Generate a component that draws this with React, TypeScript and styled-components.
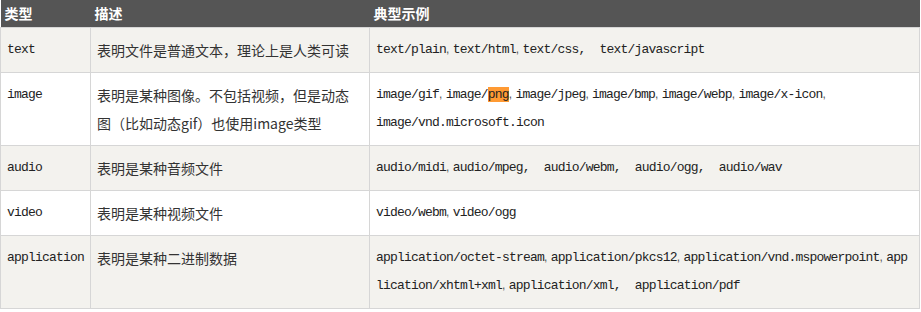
import React from 'react'
import styled, { createGlobalStyle } from 'styled-components'

const GlobalStyle = createGlobalStyle`
  body {
    margin: 0;
    background: #ffffff;
    font-family: "Noto Sans CJK SC", "Noto Sans", sans-serif;
  }
`

const Table = styled.table`
  width: 920px;
  border-collapse: collapse;
  table-layout: fixed;
  font-size: 14px;
  color: #333333;
`

const HeadCell = styled.th<{ $width?: number }>`
  width: ${p => (p.$width ? `${p.$width}px` : 'auto')};
  background: #555555;
  color: #ffffff;
  font-weight: 700;
  font-size: 14px;
  line-height: 19px;
  text-align: left;
  padding: 4px 4px;
  border: none;
`

const Row = styled.tr<{ $striped: boolean }>`
  background: ${p => (p.$striped ? '#f3f2ee' : '#ffffff')};
`

const Cell = styled.td<{ $mono?: boolean; $breakAll?: boolean }>`
  border: 1px solid #d6d6d6;
  padding: 8px 6px 8px;
  vertical-align: top;
  line-height: 28px;
  font-family: ${p =>
    p.$mono
      ? '"Liberation Mono", "DejaVu Sans Mono", monospace'
      : '"Noto Sans CJK SC", "Noto Sans", sans-serif'};
  font-size: ${p => (p.$mono ? '13px' : '14px')};
  letter-spacing: ${p => (p.$mono ? '-0.8px' : '0')};
  color: ${p => (p.$mono ? '#222222' : '#333333')};
  word-break: ${p => (p.$breakAll ? 'break-all' : 'normal')};
`

const DescCell = styled(Cell)`
  padding-right: 14px;
`

const NarrowSep = styled.span`
  font-family: "Liberation Sans", Arial, sans-serif;
  font-size: 12px;
  line-height: 1;
  letter-spacing: 0;
  color: #555555;
`

const Highlight = styled.span`
  background: #ff9a33;
`

type Sep = 'narrow' | 'wide'
type Example = { text: string; hl?: string; sep?: Sep }
type MimeRow = { type: string; desc: string; examples: Example[]; breakAll?: boolean }

const rows: MimeRow[] = [
  {
    type: 'text',
    desc: '表明文件是普通文本，理论上是人类可读',
    examples: [
      { text: 'text/plain', sep: 'narrow' },
      { text: 'text/html', sep: 'narrow' },
      { text: 'text/css', sep: 'wide' },
      { text: 'text/javascript' },
    ],
  },
  {
    type: 'image',
    desc: '表明是某种图像。不包括视频，但是动态图（比如动态gif）也使用image类型',
    examples: [
      { text: 'image/gif', sep: 'narrow' },
      { text: 'image/', hl: 'png', sep: 'narrow' },
      { text: 'image/jpeg', sep: 'narrow' },
      { text: 'image/bmp', sep: 'narrow' },
      { text: 'image/webp', sep: 'narrow' },
      { text: 'image/x-icon', sep: 'narrow' },
      { text: 'image/vnd.microsoft.icon' },
    ],
  },
  {
    type: 'audio',
    desc: '表明是某种音频文件',
    examples: [
      { text: 'audio/midi', sep: 'narrow' },
      { text: 'audio/mpeg', sep: 'wide' },
      { text: 'audio/webm', sep: 'wide' },
      { text: 'audio/ogg', sep: 'wide' },
      { text: 'audio/wav' },
    ],
  },
  {
    type: 'video',
    desc: '表明是某种视频文件',
    examples: [
      { text: 'video/webm', sep: 'narrow' },
      { text: 'video/ogg' },
    ],
  },
  {
    type: 'application',
    desc: '表明是某种二进制数据',
    breakAll: true,
    examples: [
      { text: 'application/octet-stream', sep: 'narrow' },
      { text: 'application/pkcs12', sep: 'narrow' },
      { text: 'application/vnd.mspowerpoint', sep: 'narrow' },
      { text: 'application/xhtml+xml', sep: 'narrow' },
      { text: 'application/xml', sep: 'wide' },
      { text: 'application/pdf' },
    ],
  },
]

function Examples({ items }: { items: Example[] }) {
  return (
    <>
      {items.map((ex, i) => (
        <React.Fragment key={i}>
          {ex.text}
          {ex.hl && <Highlight>{ex.hl}</Highlight>}
          {ex.sep === 'narrow' && <NarrowSep>, </NarrowSep>}
          {ex.sep === 'wide' && ',\u00a0 '}
        </React.Fragment>
      ))}
    </>
  )
}

function App() {
  return (
    <>
      <GlobalStyle />
      <Table>
        <thead>
          <tr>
            <HeadCell $width={82}>类型</HeadCell>
            <HeadCell $width={271}>描述</HeadCell>
            <HeadCell>典型示例</HeadCell>
          </tr>
        </thead>
        <tbody>
          {rows.map((r, i) => (
            <Row key={r.type} $striped={i % 2 === 0}>
              <Cell $mono>{r.type}</Cell>
              <DescCell>{r.desc}</DescCell>
              <Cell $mono $breakAll={r.breakAll}>
                <Examples items={r.examples} />
              </Cell>
            </Row>
          ))}
        </tbody>
      </Table>
    </>
  )
}

export default App
